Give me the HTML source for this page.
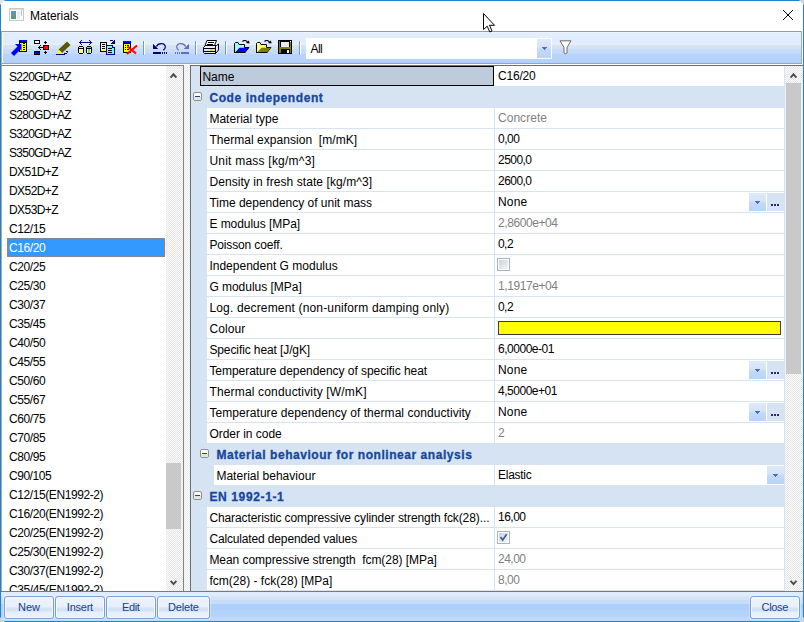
<!DOCTYPE html>
<html><head><meta charset="utf-8"><title>Materials</title>
<style>
html,body{margin:0;padding:0}
body{width:804px;height:622px;overflow:hidden;background:#fff;position:relative;font-family:"Liberation Sans", sans-serif;font-size:12px;color:#000}
div,span,svg{position:absolute;box-sizing:border-box}
.t{white-space:pre;overflow:visible}
.li{left:7px;width:158px;height:19px}
.btn{height:23px;top:596px;border:1px solid #7d9fd6;border-radius:3px;background:linear-gradient(#edf3fc 0,#e8effb 10px,#d5e2f4 11px,#d5e2f4 14px,#e6eefa 15px,#ebf1fc 100%);box-shadow:inset 0 0 0 1px #f4f8fe,0 0 0 1px rgba(255,255,255,.35)}
.sep{top:41px;width:2px;height:14px;border-left:1px solid #6f9ad8;background:#fff}
.ddb{width:17px;height:18px;background:linear-gradient(#dde9fb 0,#d5e3f7 45%,#c2d9f9 55%,#b9d3f8 100%)}
.ell{width:17px;height:18px;background:#d5e3f3}
.cb{left:497px;width:13px;height:13px;border:1px solid #a3b3d0;background:#fff}
.cb i{position:absolute;left:1px;top:1px;width:9px;height:9px;background:linear-gradient(135deg,#cdd2da,#f4f4f4)}
</style></head><body>

<div style="left:0;top:0;width:804px;height:622px;background:#fff"></div>
<div style="left:0;top:0;width:804px;height:1px;background:#1883d7"></div>
<div style="left:0;top:0;width:1px;height:622px;background:#1883d7"></div>
<div style="left:803px;top:0;width:1px;height:622px;background:#1883d7"></div>
<div style="left:0;top:621px;width:804px;height:1px;background:#1883d7"></div>
<svg style="left:0;top:0" width="5" height="5"><polygon points="0,0 5,0 0,5" fill="#e6e6e6"/></svg>
<svg style="left:799px;top:0" width="5" height="5"><polygon points="0,0 5,0 5,5" fill="#d0d0d0"/></svg>
<svg style="left:0;top:617px" width="5" height="5"><polygon points="0,0 0,5 5,5" fill="#d0d0d0"/></svg>
<svg style="left:799px;top:617px" width="5" height="5"><polygon points="5,0 5,5 0,5" fill="#d0d0d0"/></svg>
<svg style="left:9px;top:8px" width="15" height="13" shape-rendering="crispEdges">
<rect x="0" y="0" width="15" height="13" fill="#c9c9c9"/><rect x="1" y="1" width="13" height="11" fill="#fbfbfb"/>
<defs><linearGradient id="tg" x1="0" y1="0" x2="0.4" y2="1"><stop offset="0" stop-color="#6f8fcc"/><stop offset="1" stop-color="#4f9f6c"/></linearGradient></defs><rect x="2" y="3" width="5" height="8" fill="url(#tg)"/>
<rect x="8" y="3" width="3" height="8" fill="#ececec"/><rect x="12" y="2" width="1" height="6" fill="#a8c4e4"/>
<rect x="1" y="1" width="13" height="1" fill="#dcdcdc"/></svg>
<span class="t" style="left:30px;top:1px;height:30px;line-height:30px;color:#000;letter-spacing:-0.021px;">Materials</span>
<svg style="left:782px;top:9px" width="12" height="12"><path d="M1 1 L11 11 M11 1 L1 11" stroke="#000" stroke-width="1" fill="none"/></svg>
<div style="left:1px;top:31px;width:801px;height:1px;background:#9b9b9b"></div>
<div style="left:1px;top:31px;width:1px;height:561px;background:#a9a9a9"></div>
<div style="left:801px;top:31px;width:1px;height:34px;background:#a9a9a9"></div>
<div style="left:3px;top:32px;width:798px;height:31px;background:linear-gradient(#f8fbff 0,#e2edfd 1px,#e1ecfc 11px,#e5eef9 11px,#e5eef9 13px,#d6e4f3 13px,#d3e2f2 17px,#c8ddfa 17.5px,#c5dbfa 22px,#b6d3fb 22px,#b3d2fb 31px)"></div>
<div style="left:2px;top:63px;width:800px;height:1px;background:#9aa3b4"></div>
<div style="left:2px;top:64px;width:800px;height:1px;background:#fff"></div>
<svg style="left:11px;top:40px" width="17" height="16" viewBox="0 0 17 16" shape-rendering="crispEdges"><rect x="8" y="0" width="8" height="2" fill="#0000ff"/><rect x="8" y="2" width="8" height="10" fill="#000"/><rect x="9" y="3" width="6" height="8" fill="#ffff00"/><rect x="12" y="3" width="2" height="1" fill="#000"/><rect x="12" y="5" width="2" height="1" fill="#000"/><rect x="12" y="7" width="2" height="1" fill="#000"/><rect x="12" y="9" width="2" height="1" fill="#000"/><polygon points="4,4 10.5,4 10.5,10.5" fill="#0000ff" shape-rendering="auto"/><polygon points="0,13 3,16 10,9 7,6" fill="#0000ff" shape-rendering="auto"/></svg>
<svg style="left:34px;top:40px" width="16" height="16" viewBox="0 0 16 16" shape-rendering="crispEdges"><rect x="0" y="0" width="6" height="4" fill="#000"/><rect x="1" y="1" width="4" height="2" fill="#fff"/><rect x="0" y="11" width="6" height="4" fill="#000"/><rect x="1" y="12" width="4" height="2" fill="#0000ff"/><rect x="9" y="5" width="6" height="5" fill="#000"/><rect x="10" y="6" width="4" height="3" fill="#ff0000"/><rect x="4" y="7" width="5" height="1" fill="#000"/><rect x="5" y="6" width="1" height="3" fill="#000"/><rect x="6" y="5" width="1" height="1" fill="#000"/><rect x="6" y="9" width="1" height="1" fill="#000"/><rect x="11" y="1" width="1" height="3" fill="#000"/><rect x="10" y="2" width="3" height="1" fill="#000"/><rect x="11" y="11" width="1" height="3" fill="#000"/><rect x="10" y="12" width="3" height="1" fill="#000"/></svg>
<svg style="left:56px;top:41px" width="16" height="15" viewBox="0 0 16 15"><polygon points="2.5,8.5 11,0.5 14.5,4 6,12" fill="#5a5a00"/><polygon points="2.5,8.5 6,12 1,13.2" fill="#ffff00"/><rect x="0" y="13" width="9" height="1" fill="#000080"/><rect x="8" y="12" width="3" height="1" fill="#000080"/><rect x="10" y="10" width="2" height="1" fill="#000080"/><rect x="11" y="11" width="1" height="1" fill="#5a5ab0"/></svg>
<svg style="left:78px;top:40px" width="16" height="16" viewBox="0 0 16 16" shape-rendering="crispEdges"><rect x="1" y="2" width="13" height="1" fill="#000080"/><rect x="2" y="1" width="1" height="3" fill="#000080"/><rect x="3" y="0" width="1" height="1" fill="#000080"/><rect x="3" y="4" width="1" height="1" fill="#000080"/><rect x="12" y="1" width="1" height="3" fill="#000080"/><rect x="11" y="0" width="1" height="1" fill="#000080"/><rect x="11" y="4" width="1" height="1" fill="#000080"/><rect x="0" y="7" width="6" height="6" fill="#000"/><rect x="1" y="6" width="4" height="8" fill="#000"/><rect x="1" y="7" width="4" height="1" fill="#ffff55"/><rect x="1" y="9" width="4" height="4" fill="#fff"/><rect x="2" y="9" width="2" height="4" fill="#ffff55"/><rect x="8" y="7" width="6" height="6" fill="#000"/><rect x="9" y="6" width="4" height="8" fill="#000"/><rect x="9" y="7" width="4" height="1" fill="#55ee55"/><rect x="9" y="9" width="4" height="4" fill="#fff"/><rect x="10" y="9" width="2" height="4" fill="#55ee55"/></svg>
<svg style="left:100px;top:40px" width="16" height="16" viewBox="0 0 16 16" shape-rendering="crispEdges"><rect x="0" y="2" width="7" height="10" fill="#000"/><rect x="1" y="3" width="5" height="8" fill="#ffff66"/><rect x="2" y="4" width="3" height="1" fill="#000"/><rect x="2" y="6" width="3" height="1" fill="#000"/><rect x="2" y="8" width="3" height="1" fill="#000"/><rect x="6" y="5" width="9" height="10" fill="#000080"/><rect x="7" y="6" width="7" height="8" fill="#66ffff"/><rect x="8" y="8" width="4" height="1" fill="#000"/><rect x="8" y="10" width="4" height="1" fill="#000"/><rect x="8" y="12" width="4" height="1" fill="#000"/><rect x="12" y="5" width="3" height="3" fill="#cfe0f6"/><rect x="12" y="7" width="3" height="1" fill="#000080"/><rect x="12" y="5" width="1" height="3" fill="#000080"/><rect x="10" y="0" width="3" height="1" fill="#000080"/><rect x="13" y="1" width="1" height="1" fill="#000080"/><rect x="14" y="0" width="1" height="4" fill="#000080"/><rect x="11" y="3" width="4" height="1" fill="#000080"/><rect x="12" y="2" width="2" height="1" fill="#000080"/></svg>
<svg style="left:123px;top:41px" width="16" height="15" viewBox="0 0 16 15" shape-rendering="crispEdges"><rect x="0" y="0" width="8" height="2" fill="#0000ff"/><rect x="0" y="2" width="8" height="10" fill="#000"/><rect x="1" y="3" width="6" height="8" fill="#ffff00"/><rect x="2" y="4" width="1" height="1" fill="#000"/><rect x="2" y="6" width="1" height="1" fill="#000"/><rect x="2" y="8" width="1" height="1" fill="#000"/><rect x="4" y="4" width="2" height="1" fill="#000"/><rect x="4" y="6" width="2" height="1" fill="#000"/><rect x="4" y="8" width="2" height="1" fill="#000"/><path d="M4.5 5.5 L13 12.5 M14 4.5 L4 13" stroke="#ff0000" stroke-width="2" fill="none" shape-rendering="auto"/></svg>
<div class="sep" style="left:143px"></div>
<div class="sep" style="left:195px"></div>
<div class="sep" style="left:225px"></div>
<div class="sep" style="left:299px"></div>
<svg style="left:153px;top:42px" width="14" height="13" viewBox="0 0 14 13"><polygon points="0,2 0,7 5,7" fill="#000080"/><polygon points="0,2 5,7 0,7 0,2" fill="#000080"/><path d="M3.5 4.5 C5 0.5 12.5 0.5 12.3 5 C12.2 6.5 11.5 7.5 10.3 8.3" stroke="#000080" stroke-width="1.2" fill="none"/><rect x="0" y="10" width="8" height="2" fill="#000080"/><rect x="9" y="10" width="1" height="2" fill="#000080"/><rect x="11" y="10" width="1" height="2" fill="#000080"/><rect x="13" y="10" width="1" height="2" fill="#000080"/></svg>
<svg style="left:175px;top:42px" width="14" height="13" viewBox="0 0 14 13"><g transform="translate(14,0) scale(-1,1)"><polygon points="0,2 0,7 5,7" fill="#6a6ac4"/><polygon points="0,2 5,7 0,7 0,2" fill="#6a6ac4"/><path d="M3.5 4.5 C5 0.5 12.5 0.5 12.3 5 C12.2 6.5 11.5 7.5 10.3 8.3" stroke="#6a6ac4" stroke-width="1.2" fill="none"/><rect x="0" y="10" width="8" height="2" fill="#6a6ac4"/><rect x="9" y="10" width="1" height="2" fill="#6a6ac4"/><rect x="11" y="10" width="1" height="2" fill="#6a6ac4"/><rect x="13" y="10" width="1" height="2" fill="#6a6ac4"/></g></svg>
<svg style="left:203px;top:40px" width="17" height="15" viewBox="0 0 17 15"><polygon points="4,0.5 13.5,0.5 11.5,5.5 2,5.5" fill="#fff" stroke="#000" stroke-width="1"/><rect x="5" y="2" width="6" height="1" fill="#000"/><rect x="4" y="4" width="6" height="1" fill="#000"/><path d="M0.5 7.5 L2.5 5.5 L13.5 5.5 L15.5 4 L15.5 10 L12.5 13.5 L1.5 13.5 L0.5 12.5 Z" fill="#e8eef8" stroke="#000" stroke-width="1"/><rect x="1" y="8" width="11" height="1" fill="#000"/><rect x="1" y="11" width="11" height="1" fill="#000"/><rect x="1" y="9" width="11" height="2" fill="#d8e4f4"/><rect x="7" y="9" width="3" height="2" fill="#e8e000"/><rect x="12" y="6" width="1" height="8" fill="#000"/></svg>
<svg style="left:234px;top:40px" width="16" height="14" viewBox="0 0 16 14"><path d="M0.5 3.5 L1.5 2.5 L4 2.5 L5 4.5 L10.5 4.5 L10.5 7.5 L15 7.5 L11 12.5 L0.5 12.5 Z" fill="#9ff" stroke="#000" stroke-width="1"/><polygon points="1.5,12 5.5,7.8 15,7.8 11,12" fill="#0000ff"/><rect x="0" y="12" width="11.5" height="1" fill="#000"/><path d="M8.5 1.5 C10 0 12.5 0 14 3" stroke="#000" stroke-width="1.1" fill="none"/><polygon points="12,3 15.5,3.5 15,0.5" fill="#000"/></svg>
<svg style="left:256px;top:40px" width="16" height="14" viewBox="0 0 16 14"><path d="M0.5 3.5 L1.5 2.5 L4 2.5 L5 4.5 L10.5 4.5 L10.5 7.5 L15 7.5 L11 12.5 L0.5 12.5 Z" fill="#ff6" stroke="#000" stroke-width="1"/><polygon points="1.5,12 5.5,7.8 15,7.8 11,12" fill="#808000"/><rect x="0" y="12" width="11.5" height="1" fill="#000"/><path d="M8.5 1.5 C10 0 12.5 0 14 3" stroke="#000" stroke-width="1.1" fill="none"/><polygon points="12,3 15.5,3.5 15,0.5" fill="#000"/></svg>
<svg style="left:278px;top:40px" width="15" height="14" viewBox="0 0 15 14" shape-rendering="crispEdges"><rect x="0" y="0" width="14" height="14" fill="#000"/><rect x="1" y="1" width="12" height="12" fill="#808000"/><rect x="3" y="1" width="8" height="6" fill="#e8eef6"/><rect x="3" y="1" width="8" height="1" fill="#000"/><rect x="2" y="1" width="1" height="6" fill="#000"/><rect x="11" y="1" width="1" height="6" fill="#000"/><rect x="3" y="7" width="8" height="1" fill="#808000"/><rect x="3" y="9" width="9" height="5" fill="#000"/><rect x="9" y="10" width="2" height="3" fill="#e8eef6"/><rect x="12" y="1" width="1" height="1" fill="#fff"/></svg>
<div style="left:306px;top:38px;width:246px;height:21px;background:#fff"></div>
<div style="left:537px;top:39px;width:14px;height:19px;background:linear-gradient(#dfeafb 0,#d5e2f5 45%,#c2d9f9 55%,#b9d3f8 100%)"></div>
<svg style="left:541px;top:46px" width="7" height="5" shape-rendering="crispEdges"><rect x="1" y="1" width="5" height="1" fill="#4d6fa8"/><rect x="2" y="2" width="3" height="1" fill="#4d6fa8"/><rect x="3" y="3" width="1" height="1" fill="#4d6fa8"/></svg>
<span class="t" style="left:310.6px;top:39px;height:21px;line-height:21px;color:#000;letter-spacing:-0.648px;">All</span>
<svg style="left:559px;top:40px" width="14" height="15"><path d="M1 0.8 L12 0.8 L8 7.5 L8 13 Q6.5 14.5 5 13 L5 7.5 Z" fill="#fdfdfd" stroke="#6c6c6c" stroke-width="1" stroke-linejoin="round"/></svg>
<div style="left:1px;top:65px;width:183px;height:527px;border:1px solid #828282;border-left-color:#a9a9a9;background:#fff"></div>
<span class="t" style="left:9px;top:68px;height:19px;line-height:19px;color:#000;letter-spacing:-0.731px;">S220GD+AZ</span>
<span class="t" style="left:9px;top:87px;height:19px;line-height:19px;color:#000;letter-spacing:-0.731px;">S250GD+AZ</span>
<span class="t" style="left:9px;top:106px;height:19px;line-height:19px;color:#000;letter-spacing:-0.731px;">S280GD+AZ</span>
<span class="t" style="left:9px;top:125px;height:19px;line-height:19px;color:#000;letter-spacing:-0.731px;">S320GD+AZ</span>
<span class="t" style="left:9px;top:144px;height:19px;line-height:19px;color:#000;letter-spacing:-0.731px;">S350GD+AZ</span>
<span class="t" style="left:9px;top:163px;height:19px;line-height:19px;color:#000;letter-spacing:-0.562px;">DX51D+Z</span>
<span class="t" style="left:9px;top:182px;height:19px;line-height:19px;color:#000;letter-spacing:-0.562px;">DX52D+Z</span>
<span class="t" style="left:9px;top:201px;height:19px;line-height:19px;color:#000;letter-spacing:-0.562px;">DX53D+Z</span>
<span class="t" style="left:9px;top:220px;height:19px;line-height:19px;color:#000;letter-spacing:-0.401px;">C12/15</span>
<div class="li" style="top:238px;background:#3399ff;outline:1px dotted #c8783c;outline-offset:-1px"></div>
<span class="t" style="left:9px;top:239px;height:19px;line-height:19px;color:#fff;letter-spacing:-0.401px;">C16/20</span>
<span class="t" style="left:9px;top:258px;height:19px;line-height:19px;color:#000;letter-spacing:-0.401px;">C20/25</span>
<span class="t" style="left:9px;top:277px;height:19px;line-height:19px;color:#000;letter-spacing:-0.401px;">C25/30</span>
<span class="t" style="left:9px;top:296px;height:19px;line-height:19px;color:#000;letter-spacing:-0.401px;">C30/37</span>
<span class="t" style="left:9px;top:315px;height:19px;line-height:19px;color:#000;letter-spacing:-0.401px;">C35/45</span>
<span class="t" style="left:9px;top:334px;height:19px;line-height:19px;color:#000;letter-spacing:-0.401px;">C40/50</span>
<span class="t" style="left:9px;top:353px;height:19px;line-height:19px;color:#000;letter-spacing:-0.401px;">C45/55</span>
<span class="t" style="left:9px;top:372px;height:19px;line-height:19px;color:#000;letter-spacing:-0.401px;">C50/60</span>
<span class="t" style="left:9px;top:391px;height:19px;line-height:19px;color:#000;letter-spacing:-0.401px;">C55/67</span>
<span class="t" style="left:9px;top:410px;height:19px;line-height:19px;color:#000;letter-spacing:-0.401px;">C60/75</span>
<span class="t" style="left:9px;top:429px;height:19px;line-height:19px;color:#000;letter-spacing:-0.401px;">C70/85</span>
<span class="t" style="left:9px;top:448px;height:19px;line-height:19px;color:#000;letter-spacing:-0.401px;">C80/95</span>
<span class="t" style="left:9px;top:467px;height:19px;line-height:19px;color:#000;letter-spacing:-0.468px;">C90/105</span>
<span class="t" style="left:9px;top:486px;height:19px;line-height:19px;color:#000;letter-spacing:-0.415px;">C12/15(EN1992-2)</span>
<span class="t" style="left:9px;top:505px;height:19px;line-height:19px;color:#000;letter-spacing:-0.415px;">C16/20(EN1992-2)</span>
<span class="t" style="left:9px;top:524px;height:19px;line-height:19px;color:#000;letter-spacing:-0.415px;">C20/25(EN1992-2)</span>
<span class="t" style="left:9px;top:543px;height:19px;line-height:19px;color:#000;letter-spacing:-0.415px;">C25/30(EN1992-2)</span>
<span class="t" style="left:9px;top:562px;height:19px;line-height:19px;color:#000;letter-spacing:-0.415px;">C30/37(EN1992-2)</span>
<span class="t" style="left:9px;top:581px;height:10px;line-height:19px;color:#000;letter-spacing:-0.415px;overflow:hidden;">C35/45(EN1992-2)</span>
<div style="left:166px;top:66px;width:17px;height:525px;background:repeating-conic-gradient(#e6e6e6 0 25%,#fcfcfc 0 50%) 0 0/2px 2px"></div>
<div style="left:166px;top:463px;width:15px;height:66px;background:#c9c9c9"></div>
<svg style="left:169px;top:72px" width="9" height="7"><path d="M1.6 5.6 L4.5 2.3 L7.4 5.6" stroke="#4c4c4c" stroke-width="1.9" fill="none"/></svg>
<svg style="left:169px;top:580px" width="9" height="7"><path d="M1.6 0.8 L4.5 4.1 L7.4 0.8" stroke="#4c4c4c" stroke-width="1.9" fill="none"/></svg>
<div style="left:184px;top:65px;width:6px;height:527px;background:repeating-conic-gradient(#e9e9e9 0 25%,#fcfcfc 0 50%) 0 0/2px 2px"></div>
<div style="left:190px;top:65px;width:613px;height:527px;border:1px solid #6d6d6d;border-right:none;background:#d5e3f3"></div>
<div style="left:785px;top:66px;width:18px;height:525px;background:repeating-conic-gradient(#e6e6e6 0 25%,#fcfcfc 0 50%) 0 0/2px 2px"></div>
<div style="left:786px;top:83px;width:15px;height:291px;background:#c9c9c9"></div>
<svg style="left:789px;top:72px" width="9" height="7"><path d="M1.6 5.6 L4.5 2.3 L7.4 5.6" stroke="#4c4c4c" stroke-width="1.9" fill="none"/></svg>
<svg style="left:789px;top:580px" width="9" height="7"><path d="M1.6 0.8 L4.5 4.1 L7.4 0.8" stroke="#4c4c4c" stroke-width="1.9" fill="none"/></svg>
<div style="left:200px;top:66px;width:294px;height:20px;background:#becbda;border:1px solid #000"></div>
<div style="left:494px;top:66px;width:290px;height:20px;background:#fff"></div>
<span class="t" style="left:202.4px;top:67px;height:20px;line-height:20px;color:#000;letter-spacing:-0.004px;">Name</span>
<span class="t" style="left:498px;top:66px;height:20px;line-height:20px;color:#000;letter-spacing:-0.201px;">C16/20</span>
<svg style="left:193px;top:92px" width="9" height="9"><rect x="0.5" y="0.5" width="8" height="8" rx="1.5" fill="#fafafa" stroke="#8f8f8f"/><rect x="1" y="5" width="7" height="3" fill="#e4e4e4"/><rect x="2" y="4" width="5" height="1" fill="#3038a8" shape-rendering="crispEdges"/></svg>
<span class="t" style="left:209.4px;top:88px;height:20px;line-height:20px;color:#17479a;font-weight:bold;-webkit-text-stroke:0.3px #17479a;letter-spacing:0.583px;">Code independent</span>
<div style="left:207px;top:108px;width:287px;height:20px;background:#fff"></div>
<div style="left:495px;top:108px;width:289px;height:20px;background:#fff"></div>
<span class="t" style="left:209.4px;top:109px;height:20px;line-height:20px;color:#000;letter-spacing:0.023px;">Material type</span>
<span class="t" style="left:498px;top:108px;height:20px;line-height:20px;color:#7f7f7f;letter-spacing:0.037px;">Concrete</span>
<div style="left:207px;top:129px;width:287px;height:20px;background:#fff"></div>
<div style="left:495px;top:129px;width:289px;height:20px;background:#fff"></div>
<span class="t" style="left:209.4px;top:130px;height:20px;line-height:20px;color:#000;letter-spacing:0.039px;">Thermal expansion  [m/mK]</span>
<span class="t" style="left:498px;top:129px;height:20px;line-height:20px;color:#000;letter-spacing:-0.465px;">0,00</span>
<div style="left:207px;top:150px;width:287px;height:20px;background:#fff"></div>
<div style="left:495px;top:150px;width:289px;height:20px;background:#fff"></div>
<span class="t" style="left:209.4px;top:151px;height:20px;line-height:20px;color:#000;letter-spacing:0.225px;">Unit mass [kg/m^3]</span>
<span class="t" style="left:498px;top:150px;height:20px;line-height:20px;color:#000;letter-spacing:-0.534px;">2500,0</span>
<div style="left:207px;top:171px;width:287px;height:20px;background:#fff"></div>
<div style="left:495px;top:171px;width:289px;height:20px;background:#fff"></div>
<span class="t" style="left:209.4px;top:172px;height:20px;line-height:20px;color:#000;letter-spacing:0.076px;">Density in fresh state [kg/m^3]</span>
<span class="t" style="left:498px;top:171px;height:20px;line-height:20px;color:#000;letter-spacing:-0.534px;">2600,0</span>
<div style="left:207px;top:192px;width:287px;height:20px;background:#fff"></div>
<div style="left:495px;top:192px;width:289px;height:20px;background:#fff"></div>
<span class="t" style="left:209.4px;top:193px;height:20px;line-height:20px;color:#000;letter-spacing:-0.01px;">Time dependency of unit mass</span>
<span class="t" style="left:498px;top:192px;height:20px;line-height:20px;color:#000;letter-spacing:0.203px;">None</span>
<div class="ddb" style="left:749px;top:193px"><svg style="left:5px;top:7px" width="7" height="5" shape-rendering="crispEdges"><rect x="1" y="1" width="5" height="1" fill="#4d6fa8"/><rect x="2" y="2" width="3" height="1" fill="#4d6fa8"/><rect x="3" y="3" width="1" height="1" fill="#4d6fa8"/></svg></div>
<div class="ell" style="left:767px;top:193px"><svg style="left:4px;top:11px" width="8" height="2" shape-rendering="crispEdges"><rect x="0" y="0" width="2" height="2" fill="#2a2a7a"/><rect x="3" y="0" width="2" height="2" fill="#2a2a7a"/><rect x="6" y="0" width="2" height="2" fill="#2a2a7a"/></svg></div>
<div style="left:207px;top:213px;width:287px;height:20px;background:#fff"></div>
<div style="left:495px;top:213px;width:289px;height:20px;background:#fff"></div>
<span class="t" style="left:209.4px;top:214px;height:20px;line-height:20px;color:#000;letter-spacing:-0.045px;">E modulus [MPa]</span>
<span class="t" style="left:498px;top:213px;height:20px;line-height:20px;color:#7f7f7f;letter-spacing:-0.423px;">2,8600e+04</span>
<div style="left:207px;top:234px;width:287px;height:20px;background:#fff"></div>
<div style="left:495px;top:234px;width:289px;height:20px;background:#fff"></div>
<span class="t" style="left:209.4px;top:235px;height:20px;line-height:20px;color:#000;letter-spacing:-0.134px;">Poisson coeff.</span>
<span class="t" style="left:498px;top:234px;height:20px;line-height:20px;color:#000;letter-spacing:-0.562px;">0,2</span>
<div style="left:207px;top:255px;width:287px;height:20px;background:#fff"></div>
<div style="left:495px;top:255px;width:289px;height:20px;background:#fff"></div>
<span class="t" style="left:209.4px;top:256px;height:20px;line-height:20px;color:#000;letter-spacing:0.01px;">Independent G modulus</span>
<div class="cb" style="top:258px"><i></i></div>
<div style="left:207px;top:276px;width:287px;height:20px;background:#fff"></div>
<div style="left:495px;top:276px;width:289px;height:20px;background:#fff"></div>
<span class="t" style="left:209.4px;top:277px;height:20px;line-height:20px;color:#000;letter-spacing:-0.027px;">G modulus [MPa]</span>
<span class="t" style="left:498px;top:276px;height:20px;line-height:20px;color:#7f7f7f;letter-spacing:-0.423px;">1,1917e+04</span>
<div style="left:207px;top:297px;width:287px;height:20px;background:#fff"></div>
<div style="left:495px;top:297px;width:289px;height:20px;background:#fff"></div>
<span class="t" style="left:209.4px;top:298px;height:20px;line-height:20px;color:#000;letter-spacing:0.159px;">Log. decrement (non-uniform damping only)</span>
<span class="t" style="left:498px;top:297px;height:20px;line-height:20px;color:#000;letter-spacing:-0.562px;">0,2</span>
<div style="left:207px;top:318px;width:287px;height:20px;background:#fff"></div>
<div style="left:495px;top:318px;width:289px;height:20px;background:#fff"></div>
<span class="t" style="left:209.4px;top:319px;height:20px;line-height:20px;color:#000;letter-spacing:0.107px;">Colour</span>
<div style="left:498px;top:321px;width:283px;height:14px;background:#ffff00;border:1px solid #3c3c3c"></div>
<div style="left:207px;top:339px;width:287px;height:20px;background:#fff"></div>
<div style="left:495px;top:339px;width:289px;height:20px;background:#fff"></div>
<span class="t" style="left:209.4px;top:340px;height:20px;line-height:20px;color:#000;letter-spacing:-0.102px;">Specific heat [J/gK]</span>
<span class="t" style="left:498px;top:339px;height:20px;line-height:20px;color:#000;letter-spacing:-0.473px;">6,0000e-01</span>
<div style="left:207px;top:360px;width:287px;height:20px;background:#fff"></div>
<div style="left:495px;top:360px;width:289px;height:20px;background:#fff"></div>
<span class="t" style="left:209.4px;top:361px;height:20px;line-height:20px;color:#000;letter-spacing:-0.045px;">Temperature dependency of specific heat</span>
<span class="t" style="left:498px;top:360px;height:20px;line-height:20px;color:#000;letter-spacing:0.203px;">None</span>
<div class="ddb" style="left:749px;top:361px"><svg style="left:5px;top:7px" width="7" height="5" shape-rendering="crispEdges"><rect x="1" y="1" width="5" height="1" fill="#4d6fa8"/><rect x="2" y="2" width="3" height="1" fill="#4d6fa8"/><rect x="3" y="3" width="1" height="1" fill="#4d6fa8"/></svg></div>
<div class="ell" style="left:767px;top:361px"><svg style="left:4px;top:11px" width="8" height="2" shape-rendering="crispEdges"><rect x="0" y="0" width="2" height="2" fill="#2a2a7a"/><rect x="3" y="0" width="2" height="2" fill="#2a2a7a"/><rect x="6" y="0" width="2" height="2" fill="#2a2a7a"/></svg></div>
<div style="left:207px;top:381px;width:287px;height:20px;background:#fff"></div>
<div style="left:495px;top:381px;width:289px;height:20px;background:#fff"></div>
<span class="t" style="left:209.4px;top:382px;height:20px;line-height:20px;color:#000;letter-spacing:0.17px;">Thermal conductivity [W/mK]</span>
<span class="t" style="left:498px;top:381px;height:20px;line-height:20px;color:#000;letter-spacing:-0.473px;">4,5000e+01</span>
<div style="left:207px;top:402px;width:287px;height:20px;background:#fff"></div>
<div style="left:495px;top:402px;width:289px;height:20px;background:#fff"></div>
<span class="t" style="left:209.4px;top:403px;height:20px;line-height:20px;color:#000;letter-spacing:0.058px;">Temperature dependency of thermal conductivity</span>
<span class="t" style="left:498px;top:402px;height:20px;line-height:20px;color:#000;letter-spacing:0.203px;">None</span>
<div class="ddb" style="left:749px;top:403px"><svg style="left:5px;top:7px" width="7" height="5" shape-rendering="crispEdges"><rect x="1" y="1" width="5" height="1" fill="#4d6fa8"/><rect x="2" y="2" width="3" height="1" fill="#4d6fa8"/><rect x="3" y="3" width="1" height="1" fill="#4d6fa8"/></svg></div>
<div class="ell" style="left:767px;top:403px"><svg style="left:4px;top:11px" width="8" height="2" shape-rendering="crispEdges"><rect x="0" y="0" width="2" height="2" fill="#2a2a7a"/><rect x="3" y="0" width="2" height="2" fill="#2a2a7a"/><rect x="6" y="0" width="2" height="2" fill="#2a2a7a"/></svg></div>
<div style="left:207px;top:423px;width:287px;height:20px;background:#fff"></div>
<div style="left:495px;top:423px;width:289px;height:20px;background:#fff"></div>
<span class="t" style="left:209.4px;top:424px;height:20px;line-height:20px;color:#000;letter-spacing:-0.031px;">Order in code</span>
<span class="t" style="left:498px;top:423px;height:20px;line-height:20px;color:#7f7f7f;">2</span>
<svg style="left:200px;top:449px" width="9" height="9"><rect x="0.5" y="0.5" width="8" height="8" rx="1.5" fill="#fafafa" stroke="#8f8f8f"/><rect x="1" y="5" width="7" height="3" fill="#e4e4e4"/><rect x="2" y="4" width="5" height="1" fill="#3038a8" shape-rendering="crispEdges"/></svg>
<span class="t" style="left:216.4px;top:445px;height:20px;line-height:20px;color:#17479a;font-weight:bold;-webkit-text-stroke:0.3px #17479a;letter-spacing:0.551px;">Material behaviour for nonlinear analysis</span>
<div style="left:214px;top:465px;width:280px;height:20px;background:#fff"></div>
<div style="left:495px;top:465px;width:289px;height:20px;background:#fff"></div>
<span class="t" style="left:216.4px;top:466px;height:20px;line-height:20px;color:#000;letter-spacing:0.016px;">Material behaviour</span>
<span class="t" style="left:498px;top:465px;height:20px;line-height:20px;color:#000;letter-spacing:-0.263px;">Elastic</span>
<div class="ddb" style="left:767px;top:466px"><svg style="left:5px;top:7px" width="7" height="5" shape-rendering="crispEdges"><rect x="1" y="1" width="5" height="1" fill="#4d6fa8"/><rect x="2" y="2" width="3" height="1" fill="#4d6fa8"/><rect x="3" y="3" width="1" height="1" fill="#4d6fa8"/></svg></div>
<svg style="left:193px;top:491px" width="9" height="9"><rect x="0.5" y="0.5" width="8" height="8" rx="1.5" fill="#fafafa" stroke="#8f8f8f"/><rect x="1" y="5" width="7" height="3" fill="#e4e4e4"/><rect x="2" y="4" width="5" height="1" fill="#3038a8" shape-rendering="crispEdges"/></svg>
<span class="t" style="left:209.4px;top:487px;height:20px;line-height:20px;color:#17479a;font-weight:bold;-webkit-text-stroke:0.3px #17479a;letter-spacing:0.632px;">EN 1992-1-1</span>
<div style="left:207px;top:507px;width:287px;height:20px;background:#fff"></div>
<div style="left:495px;top:507px;width:289px;height:20px;background:#fff"></div>
<span class="t" style="left:209.4px;top:508px;height:20px;line-height:20px;color:#000;letter-spacing:-0.099px;">Characteristic compressive cylinder strength fck(28)...</span>
<span class="t" style="left:498px;top:507px;height:20px;line-height:20px;color:#000;letter-spacing:-0.506px;">16,00</span>
<div style="left:207px;top:528px;width:287px;height:20px;background:#fff"></div>
<div style="left:495px;top:528px;width:289px;height:20px;background:#fff"></div>
<span class="t" style="left:209.4px;top:529px;height:20px;line-height:20px;color:#000;letter-spacing:-0.148px;">Calculated depended values</span>
<div class="cb" style="top:531px"><i></i><svg style="left:1px;top:1px" width="9" height="9"><path d="M1.5 4 L3.7 7 L7.6 1.2" stroke="#3b5c9c" stroke-width="1.6" fill="none"/></svg></div>
<div style="left:207px;top:549px;width:287px;height:20px;background:#fff"></div>
<div style="left:495px;top:549px;width:289px;height:20px;background:#fff"></div>
<span class="t" style="left:209.4px;top:550px;height:20px;line-height:20px;color:#000;letter-spacing:-0.048px;">Mean compressive strength  fcm(28) [MPa]</span>
<span class="t" style="left:498px;top:549px;height:20px;line-height:20px;color:#7f7f7f;letter-spacing:-0.506px;">24,00</span>
<div style="left:207px;top:570px;width:287px;height:20px;background:#fff"></div>
<div style="left:495px;top:570px;width:289px;height:20px;background:#fff"></div>
<span class="t" style="left:209.4px;top:571px;height:20px;line-height:20px;color:#000;letter-spacing:0.014px;">fcm(28) - fck(28) [MPa]</span>
<span class="t" style="left:498px;top:570px;height:20px;line-height:20px;color:#7f7f7f;letter-spacing:-0.465px;">8,00</span>
<div style="left:1px;top:592px;width:802px;height:29px;background:linear-gradient(#e0ebfc 0,#e0ebfc 3px,#dde8f6 3px,#dde8f6 5px,#d3e2f2 5px,#d3e2f2 8px,#c7dcf9 8px,#c7dcf9 12px,#adcffb 12px,#aed0fb 18px,#b4d3fb 18px,#b4d3fb 25px,#bfd9fb 25px,#bfd9fb 29px)"></div>
<div style="left:1px;top:591px;width:802px;height:1px;background:#7a7a7a"></div>
<div class="btn" style="left:4px;width:50px"></div>
<span class="t" style="left:18px;top:596px;height:23px;line-height:23px;color:#15428b;font-size:11px;letter-spacing:-0.005px;">New</span>
<div class="btn" style="left:55px;width:50px"></div>
<span class="t" style="left:66.87px;top:596px;height:23px;line-height:23px;color:#15428b;font-size:11px;letter-spacing:-0.253px;">Insert</span>
<div class="btn" style="left:106px;width:50px"></div>
<span class="t" style="left:122.07px;top:596px;height:23px;line-height:23px;color:#15428b;font-size:11px;letter-spacing:-0.367px;">Edit</span>
<div class="btn" style="left:157px;width:53px"></div>
<span class="t" style="left:168.06px;top:596px;height:23px;line-height:23px;color:#15428b;font-size:11px;letter-spacing:-0.183px;">Delete</span>
<div class="btn" style="left:750px;width:50px"></div>
<span class="t" style="left:761.59px;top:596px;height:23px;line-height:23px;color:#15428b;font-size:11px;letter-spacing:-0.325px;">Close</span>
<svg style="left:482px;top:12px" width="15" height="22"><path d="M1.5 1.5 L1.5 17.5 L5.2 14.2 L7.8 20 L10 19 L7.5 13.3 L12.5 13.3 Z" fill="#fff" stroke="#000" stroke-width="1" stroke-linejoin="miter"/></svg>
</body></html>
